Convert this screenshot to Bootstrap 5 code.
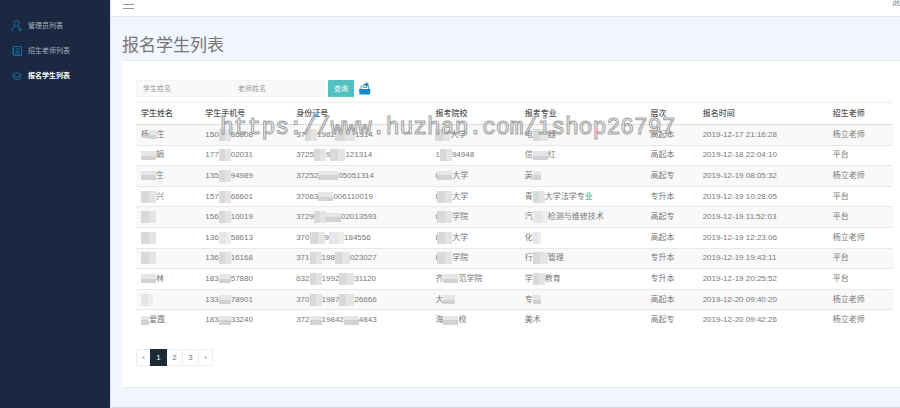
<!DOCTYPE html>
<html lang="zh-CN">
<head>
<meta charset="utf-8">
<meta name="viewport" content="width=device-width, initial-scale=1">
<title>报名学生列表</title>
<link href="https://cdn.jsdelivr.net/npm/bootstrap@5.3.0/dist/css/bootstrap.min.css" rel="stylesheet">
<style>
body{font-family:"Liberation Sans","Noto Sans CJK SC",sans-serif;font-size:8px;line-height:12px;color:#737373;background:#f0f5fe}
.side{width:110px;background:#1a2941;padding-top:13px}
.side .nav-link{height:25px;padding:0 0 0 11px;gap:5px;font-size:7px;color:#a9b1bd}
.side .nav-link.active{color:#fff;font-weight:700}
.side svg{width:12px;height:12px;fill:none;stroke:#176b9c;stroke-width:1}
.main{min-width:0;border-left:1px solid #dbe4f5;border-bottom:1px solid #d5dae4}
.topbar{height:17px;border-bottom:1px solid #e6eaf0;padding-left:12px;overflow:hidden}
.topbar button{padding:0;line-height:0}
.topbar svg{width:11px;height:5px;stroke:#999;display:block}
.logout{color:#888;text-decoration:none;width:8px;height:16px;line-height:6px;white-space:nowrap;overflow:hidden}
h1{font-size:17px;line-height:23px;font-weight:400;color:#777;margin:0;padding:17px 0 3px 11px}
.panel{margin-left:11px;padding:19px 7px 21px 14px;border:solid #e6ebf2;border-width:1px 0 1px 0}
.search-box{width:94px;height:17px;font-size:7px;line-height:12px;padding:0 6px;margin-right:1px;border:1px solid #f4f4f4;background:#f9f9f9;border-radius:0}
.search-box::placeholder{color:#999;opacity:1}
.btn-query{width:26px;height:17px;padding:0;margin-left:2px;font-size:7px;line-height:12px;border-radius:1px;background:#52c1c1;color:#fff}
.btn-query:hover{background:#45b0b0;color:#fff}
.btn-export{padding:0;margin-left:4px;line-height:0}
.btn-export svg{width:13px;height:13px}
.students{height:228px;table-layout:fixed;margin:5px 0 0;border-top:1px solid #eee;--bs-table-striped-bg:#f9f9f9;--bs-table-striped-color:#777}
.students.table>:not(caption)>*>*{padding:2px 5px;border-bottom:1px solid #e9e9e9;vertical-align:middle;white-space:nowrap;color:#777}
.students.table>thead>tr>th{height:22px;font-weight:500;color:#555;border-bottom-color:#ddd}
.students.table>tbody>tr:last-child>*{border-bottom:0}
.c1{width:8.5%}.c2{width:12%}.c3{width:18.4%}.c4{width:11.8%}.c5{width:16.6%}.c6{width:6.9%}.c7{width:17.2%}
.mosaic{display:inline-block;height:12px;vertical-align:middle;background:linear-gradient(90deg,#d9d9d9 50%,#e4e4e4 50%)}
.mosaic.low{background:linear-gradient(#e6e6e6 50%,#d2d2d2 50%);height:9px}
.mosaic.pale{background:linear-gradient(90deg,#e6e6e6 60%,#eee 60%)}
.m8{width:8px}.m12{width:12px}.m15{width:15px}.m20{width:20px}
.pager{margin-top:19px;--bs-pagination-font-size:8px;--bs-pagination-color:#777;--bs-pagination-border-color:#eee;--bs-pagination-border-radius:0px;--bs-pagination-active-bg:#1c2b36;--bs-pagination-active-border-color:#1c2b36}
.pager .page-link{width:17px;height:17px;padding:0;line-height:15px;text-align:center}
.pager .edge .page-link{width:15px}
.watermark{left:98px;top:52px;font:23px/30px "Liberation Mono",monospace;color:rgba(255,255,255,.7);-webkit-text-stroke:1px #888;opacity:.8;white-space:nowrap;pointer-events:none}
</style>
<script src="https://cdn.jsdelivr.net/npm/bootstrap@5.3.0/dist/js/bootstrap.bundle.min.js" defer></script>
</head>
<body>
<div class="d-flex min-vh-100 overflow-hidden">
<aside class="side flex-shrink-0">
<nav class="nav flex-column">
<a class="nav-link d-flex align-items-center" href="#"><svg viewBox="0 0 12 12"><circle cx="5.5" cy="3.5" r="2.7"/><path d="M1 11V9.5Q1.5 7 4 6.3M6.5 6.3L9 8.5V11M9 7.5l1.5 1.5L9 11 7.7 9z"/></svg>管理员列表</a>
<a class="nav-link d-flex align-items-center" href="#"><svg viewBox="0 0 12 12"><path d="M2.5 1.5h8v9h-8zM1 3.5h2M1 6h2M1 8.5h2M4.5 9q0-2 2-2.3Q8.500 7 8.500 9z"/><circle cx="6.500" cy="4.800" r="1.500"/></svg>招生老师列表</a>
<a class="nav-link d-flex align-items-center active" href="#" aria-current="page"><svg viewBox="0 0 12 12"><path d="M1.500 5L6 2.500 10.500 5 6 7.500zM3 6v2.500Q6 11 9 8.500V6"/></svg>报名学生列表</a>
</nav>
</aside>
<main class="main flex-grow-1">
<header class="topbar bg-white d-flex justify-content-between">
<button class="btn border-0 align-self-start p-0" type="button" aria-label="切换菜单"><svg class="mt-1" viewBox="0 0 11 5"><path d="M0 .5h11M0 4.500h11" shape-rendering="crispEdges"/></svg></button>
<a class="logout" href="#">退出</a>
</header>
<h1>报名学生列表</h1>
<section class="panel bg-white position-relative">
<form class="d-flex align-items-center">
<input class="form-control search-box" type="text" placeholder="学生姓名" aria-label="学生姓名">
<input class="form-control search-box" type="text" placeholder="老师姓名" aria-label="老师姓名">
<button class="btn border-0 btn-query" type="button">查询</button>
<button class="btn border-0 btn-export" type="button" aria-label="导出"><svg viewBox="0 0 13 13"><path d="M1 7h11.500L12 12.500H1.500z" fill="#1987c5"/><path d="M3 7V4h3M10.500 7V4H9M5 5.500h4" fill="none" stroke="#4aa0d0"/><path d="M5 3.500Q5.500 1.500 8 1.500V0l3 2.500-3 2.500V3.500z" fill="#1987c5"/></svg></button>
</form>
<table class="table table-striped students">
<colgroup><col class="c1"><col class="c2"><col class="c3"><col class="c4"><col class="c5"><col class="c6"><col class="c7"><col></colgroup>
<thead><tr><th>学生姓名</th><th>学生手机号</th><th>身份证号</th><th>报考院校</th><th>报考专业</th><th>层次</th><th>报名时间</th><th>招生老师</th></tr></thead>
<tbody>
<tr><td>杨<span class="mosaic low m8"></span>生</td><td>150<span class="mosaic m12"></span>86808</td><td>37<span class="mosaic m12"></span>1982<span class="mosaic m20"></span>1314</td><td><span class="mosaic m15"></span>大学</td><td>电<span class="mosaic m15"></span>器</td><td>高起本</td><td>2019-12-17 21:16:28</td><td>杨立老师</td></tr>
<tr><td><span class="mosaic low m15"></span>娟</td><td>177<span class="mosaic m12"></span>02031</td><td>3725<span class="mosaic m12"></span>9<span class="mosaic m15"></span>121314</td><td>1<span class="mosaic m12"></span>94948</td><td>信<span class="mosaic low m15"></span>红</td><td>高起本</td><td>2019-12-18 22:04:10</td><td>平台</td></tr>
<tr><td><span class="mosaic low m15"></span>生</td><td>135<span class="mosaic m12"></span>94989</td><td>37252<span class="mosaic low m20"></span>05051314</td><td>l<span class="mosaic low m15"></span>大学</td><td>英<span class="mosaic low m8"></span></td><td>高起专</td><td>2019-12-19 08:05:32</td><td>杨立老师</td></tr>
<tr><td><span class="mosaic m15"></span>兴</td><td>157<span class="mosaic m12"></span>66601</td><td>37063<span class="mosaic low m15"></span>006110019</td><td>l<span class="mosaic m15"></span>大学</td><td>青<span class="mosaic m12"></span>大学法学专业</td><td>专升本</td><td>2019-12-19 10:28:05</td><td>平台</td></tr>
<tr><td><span class="mosaic m15"></span></td><td>156<span class="mosaic m12"></span>10019</td><td>3729<span class="mosaic m12"></span><span class="mosaic low m15"></span>02013593</td><td>l<span class="mosaic m15"></span>学院</td><td>汽<span class="mosaic pale m15"></span>检测与维修技术</td><td>高起专</td><td>2019-12-19 11:52:03</td><td>平台</td></tr>
<tr><td><span class="mosaic m15"></span></td><td>136<span class="mosaic pale m12"></span>58613</td><td>370<span class="mosaic m15"></span>9<span class="mosaic pale m15"></span>184556</td><td>l<span class="mosaic m15"></span>大学</td><td>化<span class="mosaic pale m8"></span></td><td>高起本</td><td>2019-12-19 12:23:06</td><td>杨立老师</td></tr>
<tr><td><span class="mosaic m15"></span></td><td>136<span class="mosaic m12"></span>16168</td><td>371<span class="mosaic m12"></span>198<span class="mosaic m15"></span>023027</td><td>l<span class="mosaic m15"></span>学院</td><td>行<span class="mosaic m15"></span>管理</td><td>专升本</td><td>2019-12-19 19:43:11</td><td>平台</td></tr>
<tr><td><span class="mosaic low m15"></span>林</td><td>183<span class="mosaic low m12"></span>57880</td><td>632<span class="mosaic m12"></span>1992<span class="mosaic m15"></span>31120</td><td>齐<span class="mosaic low m15"></span>范学院</td><td>学<span class="mosaic m12"></span>教育</td><td>专升本</td><td>2019-12-19 20:25:52</td><td>平台</td></tr>
<tr><td><span class="mosaic pale m12"></span></td><td>133<span class="mosaic low m12"></span>78901</td><td>370<span class="mosaic m12"></span>1987<span class="mosaic m15"></span>26666</td><td>大<span class="mosaic low m12"></span></td><td>专<span class="mosaic low m8"></span></td><td>高起本</td><td>2019-12-20 09:40:20</td><td>杨立老师</td></tr>
<tr><td><span class="mosaic low m8"></span>爱霞</td><td>183<span class="mosaic low m12"></span>33240</td><td>372<span class="mosaic low m12"></span>19842<span class="mosaic low m15"></span>4843</td><td>海<span class="mosaic low m15"></span>校</td><td>美术</td><td>高起专</td><td>2019-12-20 09:42:26</td><td>杨立老师</td></tr>
</tbody>
</table>
<nav aria-label="分页"><ul class="pagination pager mb-0">
<li class="page-item edge"><a class="page-link" href="#" aria-label="上一页">‹</a></li>
<li class="page-item active" aria-current="page"><a class="page-link" href="#">1</a></li>
<li class="page-item"><a class="page-link" href="#">2</a></li>
<li class="page-item"><a class="page-link" href="#">3</a></li>
<li class="page-item edge"><a class="page-link" href="#" aria-label="下一页">›</a></li>
</ul></nav>
<div class="watermark position-absolute">https://www.huzhan.com/ishop26797</div>
</section>
</main>
</div>
</body>
</html>
